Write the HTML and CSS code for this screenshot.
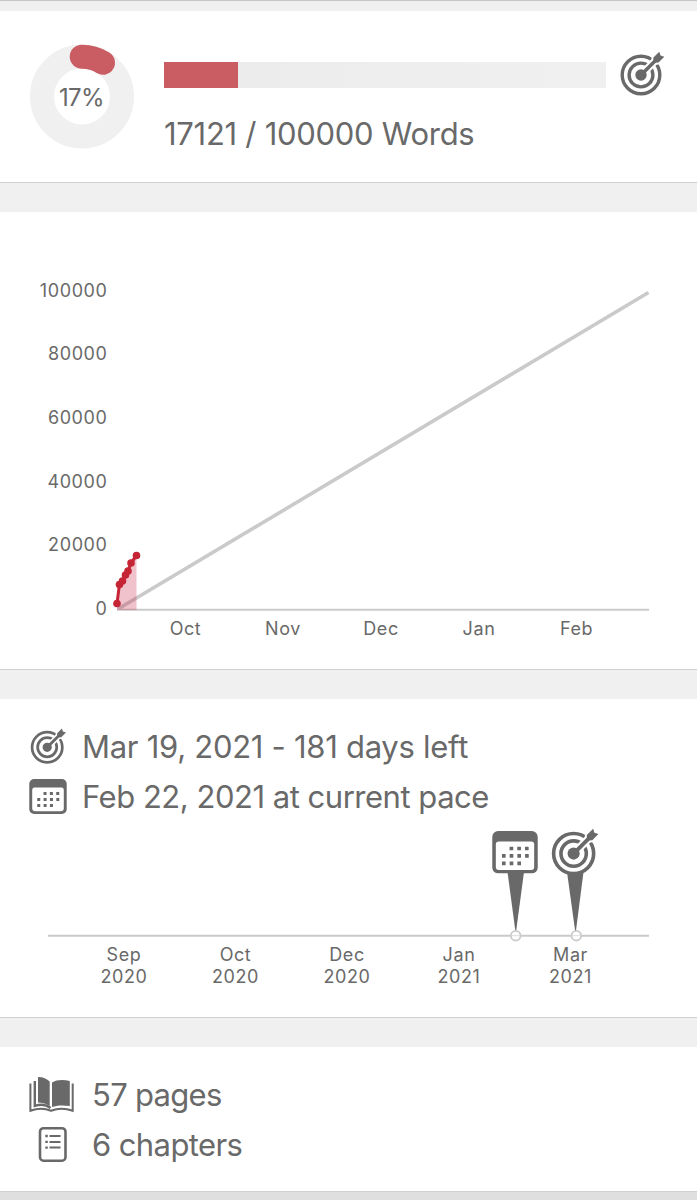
FILE: index.html
```html
<!DOCTYPE html>
<html lang="en">
<head>
    <meta charset="UTF-8">
    <meta name="viewport" content="width=device-width, initial-scale=1.0">
    <title>Writing progress</title>
    <link rel="stylesheet" href="styles.css">
</head>
<body>
    <!-- shared icons -->
    <svg class="icon-defs" width="0" height="0">
        <symbol id="target" viewBox="-22 -24 46 46">
            <circle r="18.8" fill="none" stroke="#696969" stroke-width="3.4"/>
            <circle r="11.9" fill="none" stroke="#696969" stroke-width="3.4"/>
            <path d="M0 0L18 -18" stroke="#fff" stroke-width="7.5"/>
            <path d="M12.5 -12.5L12.6 -17.5L18.5 -23.3L19.5 -19.5L23.3 -18.5L17.5 -12.6Z" fill="#fff" stroke="#fff" stroke-width="4"/>
            <circle r="5.7" fill="#696969"/>
            <path d="M0 0L15 -15" stroke="#696969" stroke-width="3.6"/>
            <path d="M12.3 -12.3L12.4 -17.5L18.3 -23.3L19.5 -19.5L23.3 -18.3L17.5 -12.4Z" fill="#696969"/>
        </symbol>
        <symbol id="calendar" viewBox="0 0 46 43">
            <rect width="46" height="43" rx="6" fill="#696969"/>
            <rect x="3.6" y="10.5" width="38.8" height="29" rx="3" fill="#fff"/>
            <path d="M17.5 17.7H37M9.8 25.2H37M9.8 32.7H29.4" fill="none" stroke="#696969" stroke-width="3.7" stroke-dasharray="3.7 4.1"/>
        </symbol>
    </svg>

    <section class="card progress">
        <svg class="donut" width="104" height="105" viewBox="0 0 104 105">
            <circle cx="52" cy="52.5" r="40" fill="none" stroke="#f0f0f0" stroke-width="24"/>
            <path d="M51.7 12.7A40 40 0 0 1 73 18.7" fill="none" stroke="#c95d63" stroke-width="24" stroke-linecap="round"/>
            <text x="51.5" y="61.5" class="percent">17%</text>
        </svg>
        <div class="progress-main">
            <div class="bar-row">
                <div class="bar"><div class="bar-fill"></div></div>
                <svg width="46" height="46"><use href="#target"/></svg>
            </div>
            <div class="words">17121 / 100000 Words</div>
        </div>
    </section>

    <section class="card chart">
        <svg width="697" height="457" viewBox="0 212 697 457">
            <g class="labels y-labels">
                <text x="107.5" y="297">100000</text>
                <text x="107.5" y="360">80000</text>
                <text x="107.5" y="424">60000</text>
                <text x="107.5" y="488">40000</text>
                <text x="107.5" y="551">20000</text>
                <text x="107.5" y="615">0</text>
            </g>
            <path d="M117 609.7H649" stroke="#cacaca" stroke-width="2"/>
            <path d="M118 609L648.5 292.5" stroke="#cacaca" stroke-width="3.6"/>
            <path d="M117 610V603.5L119.5 584L122.5 581L125.5 575L128 571L131 563L136.5 555.5V610Z" fill="#c82349" fill-opacity=".28"/>
            <path d="M117 603.5L119.5 584L122.5 581L125.5 575L128 571L131 563L136.5 555.5" fill="none" stroke="#c52535" stroke-width="3"/>
            <g fill="#c52535">
                <circle cx="117" cy="603.5" r="3.8"/>
                <circle cx="119.5" cy="584.5" r="3.8"/>
                <circle cx="122.5" cy="581" r="3.8"/>
                <circle cx="125.5" cy="575" r="3.8"/>
                <circle cx="128" cy="571" r="3.8"/>
                <circle cx="131" cy="563" r="3.8"/>
                <circle cx="136.5" cy="555.5" r="3.8"/>
            </g>
            <g class="labels">
                <text x="185.5" y="635">Oct</text>
                <text x="283" y="635">Nov</text>
                <text x="381" y="635">Dec</text>
                <text x="479" y="635">Jan</text>
                <text x="576.5" y="635">Feb</text>
            </g>
        </svg>
    </section>

    <section class="card dates">
        <div class="line">
            <svg class="line-icon" width="37" height="37"><use href="#target"/></svg>
            <span class="goal">Mar 19, 2021 - 181 days left</span>
        </div>
        <div class="line">
            <svg class="line-icon" width="38" height="35"><use href="#calendar"/></svg>
            <span class="pace">Feb 22, 2021 at current pace</span>
        </div>
        <svg class="timeline" width="697" height="195" viewBox="0 821 697 195">
            <path d="M48 935.7H649" stroke="#cacaca" stroke-width="2"/>
            <path d="M507.5 872H524L516 932H515.5Z" fill="#696969"/>
            <path d="M567 872H583.5L575.8 932H575.3Z" fill="#696969"/>
            <use href="#calendar" x="492" y="831" width="46" height="42.5"/>
            <use href="#target" x="550.2" y="828" width="49" height="49"/>
            <g fill="#fff" stroke="#cacaca" stroke-width="1.8">
                <circle cx="515.7" cy="935.7" r="4.8"/>
                <circle cx="576.3" cy="935.7" r="4.8"/>
            </g>
            <path d="M511 935.7H520M572 935.7H581" stroke="#dcdcdc"/>
            <g class="labels">
                <text x="124" y="961">Sep</text><text x="124" y="983">2020</text>
                <text x="235.5" y="961">Oct</text><text x="235.5" y="983">2020</text>
                <text x="347" y="961">Dec</text><text x="347" y="983">2020</text>
                <text x="459" y="961">Jan</text><text x="459" y="983">2021</text>
                <text x="570.5" y="961">Mar</text><text x="570.5" y="983">2021</text>
            </g>
        </svg>
    </section>

    <section class="card counts">
        <div class="line">
            <svg class="count-icon" width="46" height="37" viewBox="0 0 46 37">
                <path d="M9 1C14 1 18 3 20.7 5.5V30C17 27.5 13 26.5 9 26.5Z" fill="#696969"/>
                <path d="M23 6.5C27 3.8 34 3.3 40.8 5V30C34 29 27 29.200 23 31Z" fill="#696969"/>
                <path d="M5.8 5V29.8C12 28 18 29 21.5 32" fill="none" stroke="#696969" stroke-width="2.4"/>
                <path d="M1.4 7.5V34.8C8 32.3 15 32 22 34.7C29 32 37 32.3 43.7 34.8V7.5" fill="none" stroke="#696969" stroke-width="2"/>
            </svg>
            <span>57 pages</span>
        </div>
        <div class="line">
            <svg class="count-icon" width="46" height="37" viewBox="0 0 46 37">
                <rect x="11" y="2.2" width="25.5" height="32.5" rx="3.5" fill="none" stroke="#696969" stroke-width="2.6"/>
                <path d="M20.5 10H31.5M20.5 15.9H31.5M20.5 21.6H31.5" stroke="#696969" stroke-width="2"/>
                <path d="M16.3 10H18.8M16.3 15.9H18.8M16.3 21.6H18.8" stroke="#696969" stroke-width="2.4"/>
            </svg>
            <span class="chapters">6 chapters</span>
        </div>
    </section>
</body>
</html>
```
FILE: styles.css
```css
* {
    box-sizing: border-box;
}
body {
    margin: 0;
    height: 1200px;
    overflow: hidden;
    background-color: #dfdfdf;
    color: #696969;
    font-family: Inter, sans-serif;
    font-size: 31px;
}
svg {
    display: block;
    flex: none;
}
.icon-defs {
    display: none;
}
.card {
    background-color: #fff;
    border-top: 29px solid #f0f0f0;
    border-bottom: 1px solid #d0d0d0;
}
.progress {
    display: flex;
    height: 183px;
    padding: 33px 0 0 30px;
    border-top-width: 11px;
}
.progress::before {
    content: "";
    position: absolute;
    top: 0;
    left: 0;
    width: 100%;
    height: 1px;
    background-color: #c5c5c5;
}
.percent {
    font-size: 24px;
    letter-spacing: -0.6px;
    text-anchor: middle;
    fill: #696969;
}
.progress-main {
    margin-left: 30px;
    padding-top: 7px;
}
.bar-row {
    display: flex;
    align-items: center;
    gap: 13px;
    height: 46px;
}
.bar {
    width: 442px;
    height: 26px;
    margin-top: 2px;
    background: linear-gradient(to right, #ebebeb, #f0f0f0);
}
.bar-fill {
    width: 74px;
    height: 100%;
    background-color: #c95d63;
}
.words {
    margin-top: 17px;
    line-height: 40px;
    letter-spacing: -0.28px;
    white-space: nowrap;
}
.chart {
    height: 487px;
}
.labels {
    font-size: 18px;
    letter-spacing: 0.6px;
    text-anchor: middle;
    fill: #696969;
}
.y-labels {
    text-anchor: end;
}
.dates {
    height: 348px;
    padding-top: 22px;
}
.line {
    display: flex;
    align-items: center;
    height: 50px;
    padding-left: 29px;
    white-space: nowrap;
    letter-spacing: -0.7px;
}
.line-icon {
    width: 38px;
    margin-right: 15px;
}
.goal {
    letter-spacing: -0.28px;
}
.pace {
    letter-spacing: -0.48px;
}
.counts {
    height: 174px;
    padding-top: 22px;
}
.count-icon {
    margin-right: 17px;
}
.chapters {
    letter-spacing: -0.6px;
}
```
